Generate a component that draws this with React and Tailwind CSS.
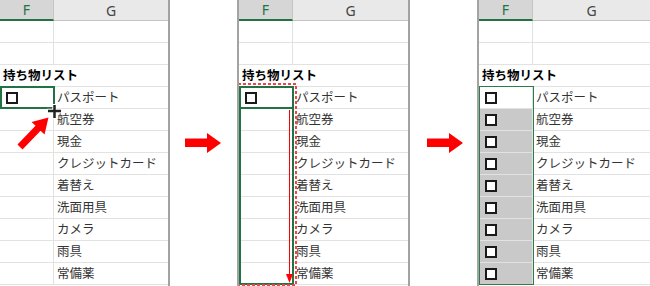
const items = ["パスポート", "航空券", "現金", "クレジットカード", "着替え", "洗面用具", "カメラ", "雨具", "常備薬"];

const jp = { fontFamily: '"Noto Sans CJK JP", "Noto Sans", sans-serif' };

function Box() {
  return <span className="block w-[12px] h-[12px] border-2 border-[#1a1a1a] bg-white" />;
}

function RedArrow() {
  return (
    <svg width="36" height="20" viewBox="0 0 36 20">
      <polygon points="0,5.5 22,5.5 22,0 36,10 22,20 22,14 0,14" fill="#ff0000" />
    </svg>
  );
}

function Sheet({ variant, className, children }) {
  return (
    <div className={`relative flex flex-col h-[286px] overflow-hidden ${className}`} style={jp}>
      <div className="flex h-[21px] shrink-0" style={{ fontFamily: '"Noto Sans", sans-serif' }}>
        <div className="w-[54px] shrink-0 bg-[#d6d6d6] border-b-2 border-b-[#217346] border-r border-r-[#c4c4c4] flex items-center justify-center text-[#217346] text-[14px]">
          F
        </div>
        <div className="flex-1 bg-[#e9e9e9] border-b border-[#c4c4c4] flex items-center justify-center text-[#444] text-[14px]">
          G
        </div>
      </div>
      {[0, 1].map((i) => (
        <div key={i} className="flex h-[22px] shrink-0 border-b border-[#e2e2e2]">
          <div className="w-[54px] shrink-0 border-r border-[#e2e2e2]" />
          <div className="flex-1" />
        </div>
      ))}
      <div className="h-[22px] shrink-0 flex items-center pl-[3px] font-bold text-black text-[12.5px] border-b border-[#e2e2e2]">
        持ち物リスト
      </div>
      {items.map((t, i) => (
        <div key={t} className="flex h-[22px] shrink-0 border-b border-[#e2e2e2]">
          <div
            className={`w-[54px] shrink-0 border-r border-[#e2e2e2] flex items-center pl-[6px] ${
              variant === 3 && i > 0 ? "bg-[#c9c9c9]" : ""
            }`}
          >
            {(i === 0 || variant === 3) && <Box />}
          </div>
          <div className="flex-1 pl-[3px] flex items-center whitespace-nowrap overflow-hidden text-[#333] text-[12.5px]">
            {t}
          </div>
        </div>
      ))}
      {children}
    </div>
  );
}

export default function App() {
  return (
    <div className="flex w-[650px] h-[286px] bg-white overflow-hidden">
      <Sheet variant={1} className="w-[170px] shrink-0 border-r-2 border-[#a3a3a3]">
        <div className="absolute left-0 top-[86px] w-[55px] h-[23px] border-2 border-[#217346]" />
        <svg className="absolute left-0 top-0" width="170" height="286">
          <g transform="translate(20,147) rotate(-46)">
            <polygon points="0,-3.5 26,-3.5 26,-9 41,0 26,9 26,3.5 0,3.5" fill="#ff0000" />
          </g>
          <g stroke="#ffffff" strokeWidth="4.5">
            <line x1="47" y1="111" x2="62" y2="111" />
            <line x1="54.5" y1="104" x2="54.5" y2="119" />
          </g>
          <g stroke="#222" strokeWidth="2.5">
            <line x1="48" y1="111" x2="61" y2="111" />
            <line x1="54.5" y1="105" x2="54.5" y2="118" />
          </g>
        </svg>
      </Sheet>

      <div className="w-[67px] shrink-0 pt-[133px] pl-[15px]">
        <RedArrow />
      </div>

      <Sheet variant={2} className="w-[173px] shrink-0 border-x-2 border-[#a3a3a3]">
        <div className="absolute left-0 top-[86px] w-[55px] h-[199px] border-2 border-[#217346]" />
        <div className="absolute left-0 top-[107px] w-[55px] h-[2px] bg-[#217346]" />
        <svg className="absolute left-0 top-0" width="170" height="286">
          <rect x="-1" y="84" width="58" height="201" fill="none" stroke="#e8474c" strokeWidth="2" strokeDasharray="3 2" />
          <line x1="50.5" y1="110" x2="50.5" y2="276" stroke="#ff0000" strokeWidth="1" />
          <polygon points="47,274 54,274 50.5,283" fill="#ff0000" />
        </svg>
      </Sheet>

      <div className="w-[67px] shrink-0 pt-[133px] pl-[17px]">
        <RedArrow />
      </div>

      <Sheet variant={3} className="flex-1 border-l-2 border-[#a3a3a3]">
        <div className="absolute left-0 top-[86px] w-[55px] h-[199px] border-[1.5px] border-[#2b7d4b]" />
      </Sheet>
    </div>
  );
}
